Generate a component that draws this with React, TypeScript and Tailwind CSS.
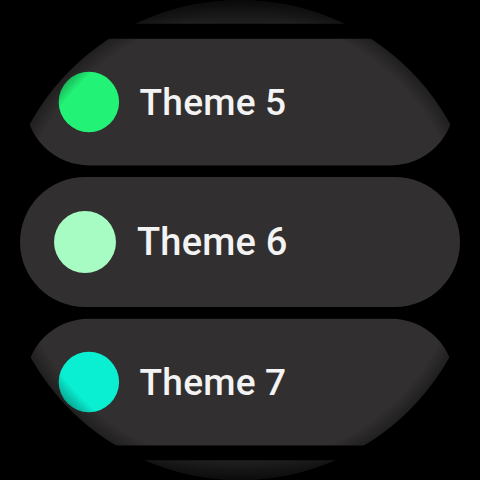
import React from "react";

type Item = { label: string; color: string; scale: string };

const items: Item[] = [
  { label: "Theme 5", color: "#22f276", scale: "scale-[0.975]" },
  { label: "Theme 6", color: "#a7fcc3", scale: "scale-100" },
  { label: "Theme 7", color: "#0aefd2", scale: "scale-[0.975]" },
];

export default function App() {
  return (
    <div className="w-[480px] h-[480px] bg-black relative overflow-hidden">
      <div className="w-[480px] h-[480px] rounded-full overflow-hidden bg-black relative">
        <div className="flex flex-col gap-[10px] mt-[-103px] px-[20px]">
          <div className="h-[130px] shrink-0 rounded-full scale-[0.95] bg-[linear-gradient(to_top,#201f1f_0px,#171717_14px,#0c0c0c_28px,#000_40px)]" />
          {items.map((it) => (
            <div
              key={it.label}
              className={`h-[130px] shrink-0 rounded-full bg-[#312f2f] flex items-center pl-[34px] ${it.scale}`}
            >
              <div
                className="w-[62px] h-[62px] rounded-full shrink-0"
                style={{ backgroundColor: it.color }}
              />
              <span
                className="ml-[21px] text-[38px] font-medium text-[#f3f3f3] leading-none tracking-[0.2px]"
                style={{ fontFamily: "Roboto, 'Liberation Sans', sans-serif" }}
              >
                {it.label}
              </span>
            </div>
          ))}
          <div className="h-[130px] shrink-0 rounded-full scale-[0.95] bg-[linear-gradient(to_bottom,#201f1f_0px,#171717_14px,#0c0c0c_26px,#000_40px)]" />
        </div>
        <div className="absolute inset-0 rounded-full pointer-events-none bg-[radial-gradient(circle_closest-side_at_center,rgba(0,0,0,0)_93%,rgba(0,0,0,0.35)_100%)]" />
      </div>
    </div>
  );
}
